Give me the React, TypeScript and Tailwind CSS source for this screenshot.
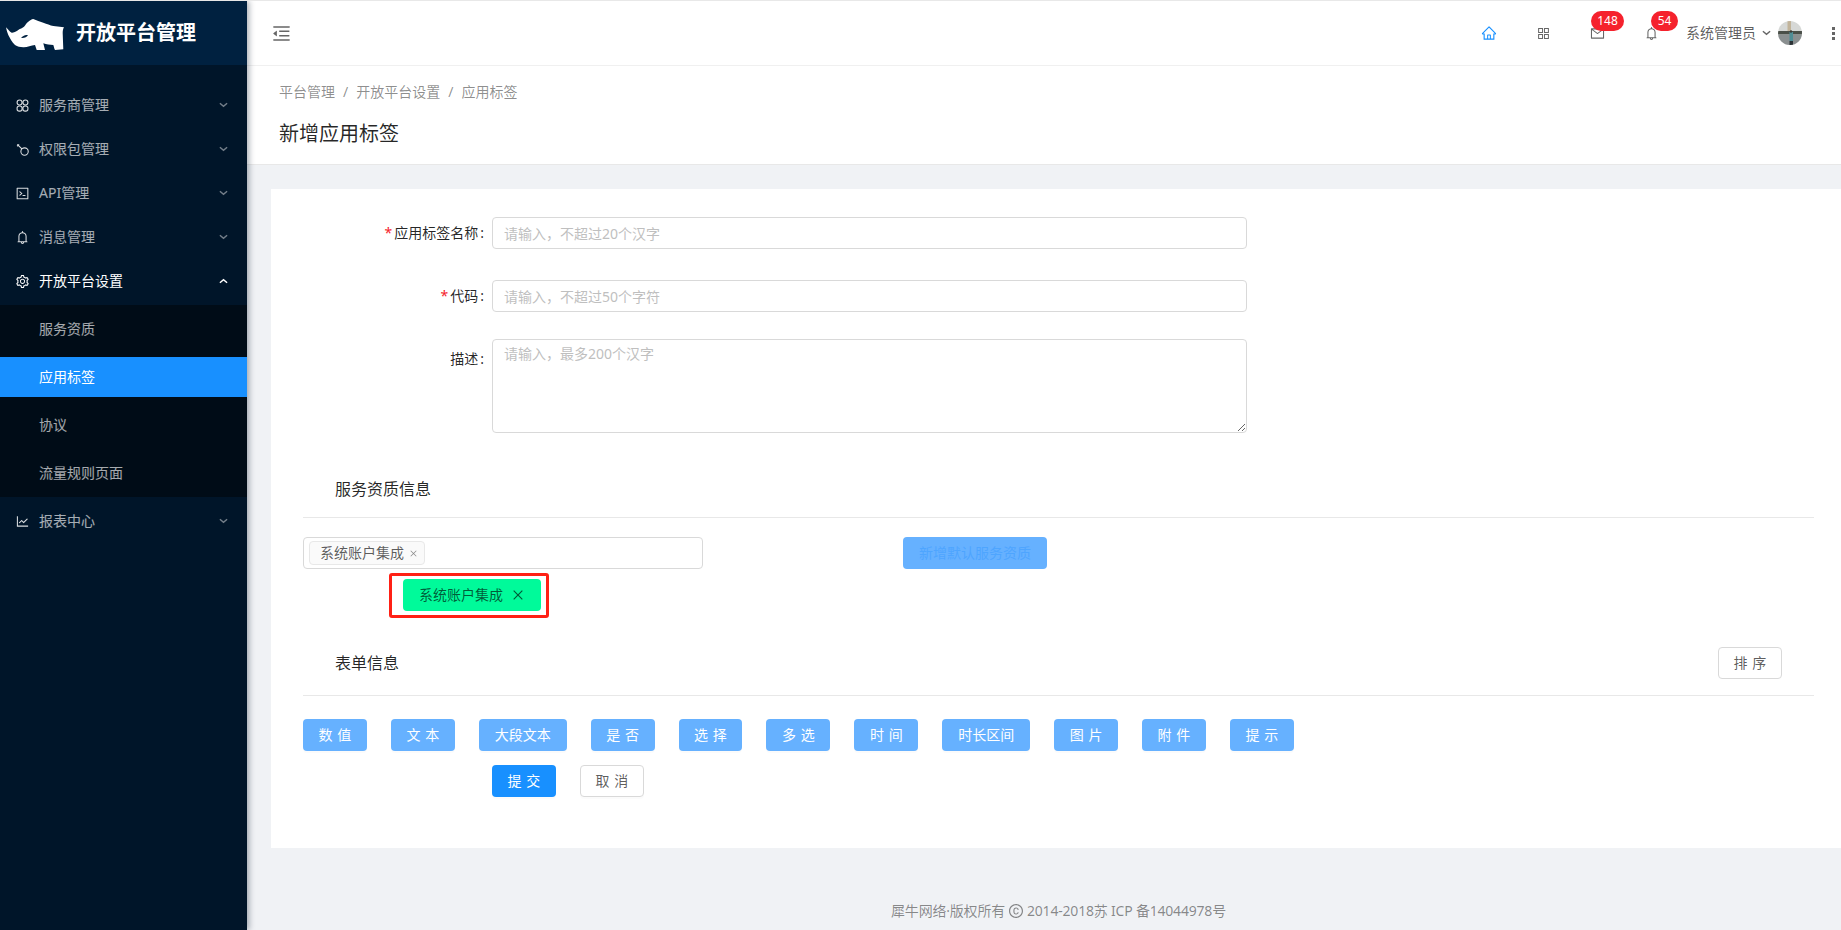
import type { ReactNode } from "react";
import {
  AiOutlineAppstore,
  AiOutlineBell,
  AiOutlineClose,
  AiOutlineCode,
  AiOutlineCopyrightCircle,
  AiOutlineHome,
  AiOutlineLineChart,
  AiOutlineMail,
  AiOutlineMenuFold,
  AiOutlineSetting,
} from "react-icons/ai";

const Chevron = ({ up = false, className = "" }: { up?: boolean; className?: string }) => (
  <svg viewBox="0 0 10 6" className={`w-[9px] h-[6px] ${className}`} fill="none" stroke="currentColor" strokeWidth="1.6">
    <path d={up ? "M1 5 L5 1.5 L9 5" : "M1 1 L5 4.5 L9 1"} />
  </svg>
);

const ProviderIcon = () => (
  <svg viewBox="0 0 12 12" className="w-[13px] h-[13px] shrink-0" fill="none" stroke="currentColor" strokeWidth="1">
    <circle cx="3.3" cy="3.2" r="2.3" />
    <circle cx="8.7" cy="3.2" r="2.3" />
    <rect x="1" y="6.4" width="4.6" height="4.8" rx="2" />
    <rect x="6.4" y="6.4" width="4.6" height="4.8" rx="2" />
  </svg>
);

const KeyIcon = () => (
  <svg viewBox="0 0 12 12" className="w-[13px] h-[13px] shrink-0" fill="none" stroke="currentColor" strokeWidth="1">
    <circle cx="7.9" cy="7.9" r="3.4" />
    <path d="M5.4 5.4 L1.2 1.2 M1 3 L2.8 1.2" />
  </svg>
);

const Rhino = () => (
  <svg viewBox="5 17 60 35" className="w-[60px] h-[35px] mt-[3px]" fill="#fff">
    <path d="M6 27.3 C8 29 9.5 32 11.7 32.7 C14.5 33 17 31 19.3 29.3 C21 28.5 22.5 28 24 26.7 C25.5 25 26.5 23 28.3 21.7 C30 20.5 31.5 19 33.3 19 C36.5 20.5 40 21.8 43.3 22.7 C47 24 50 25.3 53.3 26 L64 27.3 C63 29 62.7 31 62.7 33.3 L63.3 49.3 L55 50 C54 48.5 54 46.5 53.3 45 C50 45 46.5 44.5 43.3 43.3 L45 50 L36.7 50 L35 45 C31 45.5 27 47.5 23.3 47.3 C20 47.2 17.5 46.5 15 45 C12 42 10 38.5 8.3 35 C7.2 32.5 6.5 30 6 27.3 Z" />
    <path d="M21 38 C23 35.5 25.5 35 28 35 C27 37 24 38.5 21 38 Z" fill="#002140" />
  </svg>
);

const Avatar = () => (
  <svg viewBox="0 0 24 24" className="w-6 h-6 rounded-full">
    <rect width="24" height="24" fill="#d6d8d6" />
    <rect x="9.5" y="0" width="3.5" height="11" fill="#c2b49a" />
    <rect y="10" width="24" height="3.5" fill="#4a4f48" />
    <rect y="13.5" width="24" height="10.5" fill="#8a8f90" />
    <rect x="11.5" y="11" width="3.5" height="9" fill="#4f8d95" />
    <circle cx="13" cy="10.5" r="1.2" fill="#3c3a36" />
    <rect x="11.5" y="20" width="3.5" height="4" fill="#2c3236" />
  </svg>
);

const menuItems: { label: string; icon: ReactNode; open?: boolean }[] = [
  { label: "服务商管理", icon: <ProviderIcon /> },
  { label: "权限包管理", icon: <KeyIcon /> },
  { label: "API管理", icon: <AiOutlineCode size={15} className="shrink-0" /> },
  { label: "消息管理", icon: <AiOutlineBell size={15} className="shrink-0" /> },
  { label: "开放平台设置", icon: <AiOutlineSetting size={15} className="shrink-0" />, open: true },
];

const subItems = ["服务资质", "应用标签", "协议", "流量规则页面"];

const fieldTypes = ["数值", "文本", "大段文本", "是否", "选择", "多选", "时间", "时长区间", "图片", "附件", "提示"];

function MenuRow({ label, icon, open }: { label: string; icon: ReactNode; open?: boolean }) {
  return (
    <div className={`flex items-center h-10 pl-4 pr-[19px] ${open ? "text-white" : "text-white/65"}`}>
      <span className={`w-3 h-3 flex items-center justify-center ${open ? "text-white" : "text-white/85"}`}>{icon}</span>
      <span className="ml-[11px]">{label}</span>
      <Chevron up={open} className={`ml-auto ${open ? "text-white" : "text-white/45"}`} />
    </div>
  );
}

function Sidebar() {
  return (
    <aside className="relative z-10 w-[247px] shrink-0 bg-[#001529] shadow-[2px_0_6px_rgba(0,21,41,0.35)]">
      <div className="flex items-center h-16 pl-[5px] bg-[#002140]">
        <Rhino />
        <h1 className="ml-[11px] text-xl font-bold text-white">开放平台管理</h1>
      </div>
      <nav className="flex flex-col gap-1 pt-5">
        {menuItems.map((item) => (
          <MenuRow key={item.label} {...item} />
        ))}
        <div className="flex flex-col gap-2 py-1 bg-[#000c17]">
          {subItems.map((label) => (
            <div
              key={label}
              className={`flex items-center h-10 pl-[39px] ${label === "应用标签" ? "bg-[#1890ff] text-white" : "text-white/65"}`}
            >
              {label}
            </div>
          ))}
        </div>
        <MenuRow label="报表中心" icon={<AiOutlineLineChart size={15} className="shrink-0" />} />
      </nav>
    </aside>
  );
}

function TopBar() {
  return (
    <header className="flex items-center h-[65px] shrink-0 pl-[24px] pr-[6px] bg-white border-b border-[#f0f0f0]">
      <AiOutlineMenuFold size={21} className="text-[#666]" />
      <div className="ml-auto flex items-center text-[#666]">
        <div className="flex items-center justify-center w-[54px]">
          <AiOutlineHome size={16} className="text-[#1890ff]" />
        </div>
        <div className="flex items-center justify-center w-[54px]">
          <AiOutlineAppstore size={15} />
        </div>
        <div className="flex items-center justify-center w-[54px]">
          <span className="relative w-4 h-4 flex items-center justify-center">
            <AiOutlineMail size={15} />
            <span className="absolute left-[2px] top-[-14px] flex items-center justify-center w-[33px] h-5 rounded-full bg-[#f5222d] text-xs text-white">
              148
            </span>
          </span>
        </div>
        <div className="flex items-center justify-center w-[54px]">
          <span className="relative w-4 h-4 flex items-center justify-center">
            <AiOutlineBell size={15} />
            <span className="absolute left-2 top-[-14px] flex items-center justify-center w-[27px] h-5 rounded-full bg-[#f5222d] text-xs text-white">
              54
            </span>
          </span>
        </div>
        <span className="ml-2 text-[rgba(0,0,0,0.65)]">系统管理员</span>
        <Chevron className="ml-[6px] text-[#666]" />
        <span className="ml-[7px]">
          <Avatar />
        </span>
        <span className="ml-[30px] flex flex-col gap-[2px]">
          <i className="block w-[3px] h-[3px] bg-[#666]" />
          <i className="block w-[3px] h-[3px] bg-[#666]" />
          <i className="block w-[3px] h-[3px] bg-[#666]" />
        </span>
      </div>
    </header>
  );
}

function PageHeader() {
  return (
    <div className="h-[99px] shrink-0 pt-[15px] pl-[32px] bg-white border-b border-[#e8e8e8]">
      <div className="flex items-center h-[22px] text-[rgba(0,0,0,0.45)]">
        <span>平台管理</span>
        <span className="mx-2">/</span>
        <span>开放平台设置</span>
        <span className="mx-2">/</span>
        <span>应用标签</span>
      </div>
      <h2 className="mt-[17px] text-xl leading-7 text-[rgba(0,0,0,0.85)]">新增应用标签</h2>
    </div>
  );
}

function FormLabel({ children, required, tall }: { children: ReactNode; required?: boolean; tall?: boolean }) {
  return (
    <label className={`flex items-center justify-end w-[189px] pr-2 text-[rgba(0,0,0,0.85)] ${tall ? "h-10" : "h-8"}`}>
      {required && <span className="mr-[2px] text-[#f5222d]">*</span>}
      {children}
      <span className="ml-[2px]">:</span>
    </label>
  );
}

function SpacedText({ text }: { text: string }) {
  // two character buttons get the wide spacing, longer ones do not
  if (text.length !== 2) return <span>{text}</span>;
  return <span className="tracking-[0.34em] mr-[-0.34em]">{text}</span>;
}

function Btn({ text, className }: { text: string; className: string }) {
  return (
    <button
      type="button"
      className={`flex items-center justify-center h-8 rounded shadow-[0_2px_0_rgba(0,0,0,0.015)] ${text.length === 2 ? "w-[63.9px]" : "w-[87.9px]"} ${className}`}
    >
      <SpacedText text={text} />
    </button>
  );
}

function FormCard() {
  return (
    <div className="ml-6 mt-6 h-[659px] shrink-0 pt-7 pl-8 pr-[27px] bg-white">
      <div className="flex">
        <FormLabel required>应用标签名称</FormLabel>
        <input
          placeholder="请输入，不超过20个汉字"
          className="w-[755px] h-8 px-[11px] rounded border border-[#d9d9d9] placeholder:text-[#bfbfbf]"
        />
      </div>
      <div className="flex mt-[31px]">
        <FormLabel required>代码</FormLabel>
        <input
          placeholder="请输入，不超过50个字符"
          className="w-[755px] h-8 px-[11px] rounded border border-[#d9d9d9] placeholder:text-[#bfbfbf]"
        />
      </div>
      <div className="flex mt-[27px]">
        <FormLabel tall>描述</FormLabel>
        <textarea
          placeholder="请输入，最多200个汉字"
          className="block w-[755px] h-[94px] px-[11px] py-[4px] rounded border border-[#d9d9d9] placeholder:text-[#bfbfbf]"
        />
      </div>

      <div className="flex items-center h-[85px] pl-8 pt-[28px] border-b border-[#e8e8e8] text-base text-[rgba(0,0,0,0.85)]">
        服务资质信息
      </div>
      <div className="flex mt-[19px]">
        <div className="flex items-center w-[400px] h-8 px-[5px] rounded border border-[#d9d9d9]">
          <span className="flex items-center h-6 pl-[10px] pr-[6px] rounded-sm bg-[#fafafa] border border-[#e8e8e8] text-[rgba(0,0,0,0.65)]">
            系统账户集成
            <AiOutlineClose size={9} className="ml-[5px] text-[rgba(0,0,0,0.45)]" />
          </span>
        </div>
        <button type="button" className="ml-[200px] w-36 h-8 rounded bg-[#66b1ff] text-[#4ea5ff]">
          新增默认服务资质
        </button>
      </div>
      <div className="ml-[86px] mt-1 w-40 h-[45px] pt-[3px] pl-[11px] border-[3px] border-[#ff2015] rounded-[3px]">
        <div className="flex items-center w-[138px] h-8 pl-4 rounded bg-[#00fa9a] text-[rgba(0,0,0,0.65)]">
          系统账户集成
          <AiOutlineClose size={14} className="ml-2" />
        </div>
      </div>

      <div className="flex items-center mt-[29px] pb-4 pl-8 border-b border-[#e8e8e8] text-base text-[rgba(0,0,0,0.85)]">
        表单信息
        <button
          type="button"
          className="ml-auto mr-[32px] flex items-center justify-center w-16 h-8 rounded border border-[#d9d9d9] text-sm text-[rgba(0,0,0,0.65)]"
        >
          <SpacedText text="排序" />
        </button>
      </div>
      <div className="flex gap-6 mt-[23px]">
        {fieldTypes.map((t) => (
          <Btn key={t} text={t} className="bg-[#66b1ff] text-white" />
        ))}
      </div>
      <div className="flex gap-6 mt-[14px] ml-[189px]">
        <Btn text="提交" className="bg-[#1890ff] text-white" />
        <Btn text="取消" className="bg-white border border-[#d9d9d9] text-[rgba(0,0,0,0.65)]" />
      </div>
    </div>
  );
}

export default function App() {
  return (
    <div className="flex h-[930px] overflow-hidden border-t border-[#e8e8e8] text-sm font-['Noto_Sans','Noto_Sans_CJK_SC',sans-serif]">
      <Sidebar />
      <main className="flex-1 min-w-0 flex flex-col bg-[#f0f2f5]">
        <TopBar />
        <PageHeader />
        <FormCard />
        <footer className="flex items-center justify-center mt-[52px] pl-[29px] h-[22px] tracking-[-0.2px] text-[rgba(0,0,0,0.45)]">
          犀牛网络·版权所有
          <AiOutlineCopyrightCircle size={16} className="mx-[3px]" />
          2014-2018苏 ICP 备14044978号
        </footer>
      </main>
    </div>
  );
}
